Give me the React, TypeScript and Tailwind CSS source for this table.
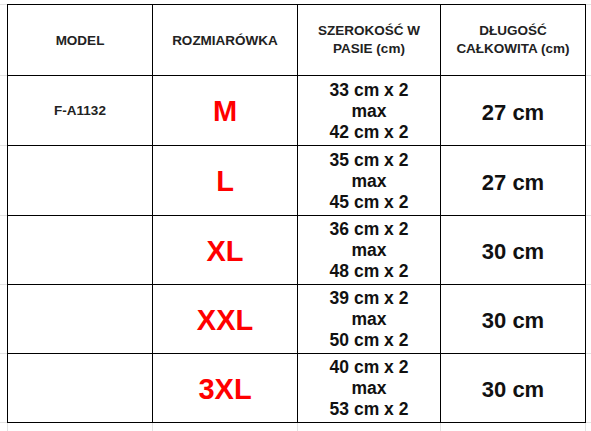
const rowHeights = ["h-[71px]", "h-[70px]", "h-[70px]", "h-[69px]", "h-[69px]", "h-[69px]"];

const sizes = [
  { model: "F-A1132", size: "M", from: "33", to: "42", length: "27 cm" },
  { model: "", size: "L", from: "35", to: "45", length: "27 cm" },
  { model: "", size: "XL", from: "36", to: "48", length: "30 cm" },
  { model: "", size: "XXL", from: "39", to: "50", length: "30 cm" },
  { model: "", size: "3XL", from: "40", to: "53", length: "30 cm" },
];

const cell = "border-r border-b border-black flex items-center justify-center text-center";
const head = "text-[13.5px] font-bold leading-[18px] text-[#222]";

// sheet gridlines peeking out around the table
const SideStrip = ({ className }: { className: string }) => (
  <div className={`flex flex-col ${className}`}>
    <div className="h-[5px] border-b border-[#e2e2e2]" />
    {rowHeights.map((h, i) => (
      <div key={i} className={`${h} border-b border-[#e2e2e2]`} />
    ))}
  </div>
);

export default function App() {
  return (
    <div
      className="w-[591px] h-[431px] bg-white flex flex-col overflow-hidden"
      style={{ fontFamily: '"Liberation Sans", Arial, sans-serif' }}
    >
      <div className="flex">
        <SideStrip className="w-[7px]" />
        <div className="mt-[4px] border-t border-l border-black grid grid-cols-[145px_145px_143px_145px] grid-rows-[71px_70px_70px_69px_69px_69px]">
          {/* Header */}
          <div className={`${cell} ${head} pt-[2px]`}>MODEL</div>
          <div className={`${cell} ${head} pt-[2px]`}>ROZMIARÓWKA</div>
          <div className={`${cell} ${head}`}>
            SZEROKOŚĆ W
            <br />
            PASIE (cm)
          </div>
          <div className={`${cell} ${head}`}>
            DŁUGOŚĆ
            <br />
            CAŁKOWITA (cm)
          </div>

          {sizes.map((r) => (
            <div key={r.size} className="contents">
              <div className={`${cell} text-[13.5px] font-bold text-[#222] pt-[1px]`}>{r.model}</div>
              <div className={`${cell} text-[29px] font-bold text-[#ff0000] pt-[3px]`}>{r.size}</div>
              <div className={`${cell} flex-col text-[17.5px] font-bold leading-[21px] text-[#111] pt-[1px]`}>
                <span>{r.from} cm x 2</span>
                <span>max</span>
                <span>{r.to} cm x 2</span>
              </div>
              <div className={`${cell} text-[22px] font-bold text-[#111] pt-[3px]`}>{r.length}</div>
            </div>
          ))}
        </div>
        <SideStrip className="flex-1" />
      </div>

      {/* bottom gridlines */}
      <div className="flex flex-1">
        <div className="w-[8px] border-r border-[#e2e2e2]" />
        <div className="w-[145px] border-r border-[#e2e2e2]" />
        <div className="w-[145px] border-r border-[#e2e2e2]" />
        <div className="w-[143px] border-r border-[#e2e2e2]" />
        <div className="w-[145px] border-r border-[#e2e2e2]" />
      </div>
    </div>
  );
}
